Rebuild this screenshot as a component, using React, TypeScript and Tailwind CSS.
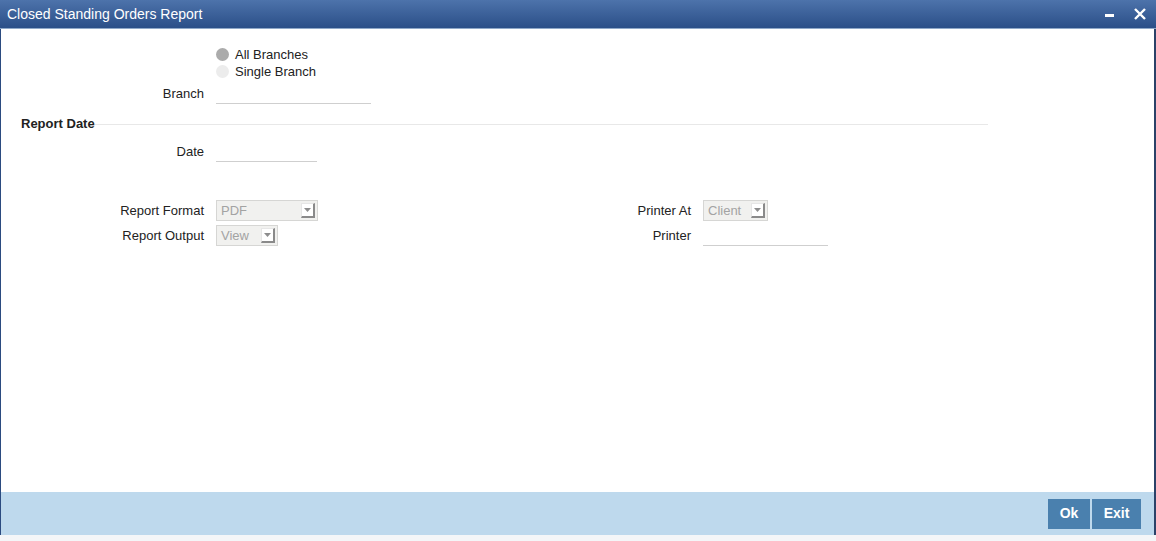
import React from "react";

const font = { fontFamily: '"Liberation Sans", Arial, sans-serif' };

const SelectBox = ({ value, width }: { value: string; width: string }) => (
  <div className={`flex items-center justify-between h-[21px] ${width} bg-[#f1f1ef] border border-[#d6d6d4] pl-1 pr-[2px]`}>
    <span className="text-[13px] text-[#a3a3a3] leading-none">{value}</span>
    <span className="flex items-center justify-center w-[14px] h-[15px] bg-white border-r-2 border-b-2 border-[#8a8a8a] border-t border-l border-t-[#e6e6e6] border-l-[#e6e6e6]">
      <svg width="7" height="4" viewBox="0 0 7 4">
        <path d="M0 0h7L3.5 4z" fill="#8d8d8d" />
      </svg>
    </span>
  </div>
);

const Underline = ({ width }: { width: string }) => (
  <div className={`h-[21px] ${width} border-b border-[#cfcfcf]`} />
);

const Label = ({ children }: { children: React.ReactNode }) => (
  <span className="text-[13px] text-[#222] text-right leading-none">{children}</span>
);

export default function App() {
  return (
    <div className="w-[1156px] h-[541px] flex flex-col bg-white overflow-hidden" style={font}>
      {/* Title bar */}
      <div className="h-[29px] shrink-0 flex items-center justify-between pl-[7px] pr-[10px] bg-gradient-to-b from-[#4d73ab] to-[#2b4f88] border-b border-[#8fa8c8]">
        <span className="text-[14px] text-white leading-none">Closed Standing Orders Report</span>
        <div className="flex items-center gap-[20px]">
          <span className="block w-[9px] h-[3px] bg-white mt-[2px]" />
          <svg width="12" height="12" viewBox="0 0 12 12">
            <path d="M1 1L11 11M11 1L1 11" stroke="white" strokeWidth="2.4" />
          </svg>
        </div>
      </div>

      {/* Body */}
      <div className="flex-1 flex flex-col border-l border-[#2b4b80] border-r-2 border-r-[#2b4268]">
        <div className="grid grid-cols-[203px_1fr] gap-x-3 items-center pt-[17px]">
          <div />
          <div className="flex flex-col">
            <div className="flex items-center gap-[6px] h-[17px]">
              <span className="w-[13px] h-[13px] rounded-full bg-[#ababab]" />
              <span className="text-[13px] text-[#222] leading-none">All Branches</span>
            </div>
            <div className="flex items-center gap-[6px] h-[17px]">
              <span className="w-[13px] h-[13px] rounded-full bg-[#ececec]" />
              <span className="text-[13px] text-[#222] leading-none">Single Branch</span>
            </div>
          </div>
        </div>

        <div className="grid grid-cols-[203px_1fr] gap-x-3 items-center mt-[3px]">
          <Label>Branch</Label>
          <Underline width="w-[155px]" />
        </div>

        <div className="flex items-center pl-5 pr-[166px] mt-[13px]">
          <span className="text-[13px] font-bold text-[#222] leading-none">Report Date</span>
          <div className="flex-1 h-px bg-[#e8e8e8] mt-[1px]" />
        </div>

        <div className="grid grid-cols-[203px_1fr] gap-x-3 items-center mt-[11px]">
          <Label>Date</Label>
          <Underline width="w-[101px]" />
        </div>

        <div className="flex mt-[38px]">
          <div className="w-[487px] grid grid-cols-[203px_1fr] gap-x-3 gap-y-[4px] items-center">
            <Label>Report Format</Label>
            <SelectBox value="PDF" width="w-[102px]" />
            <Label>Report Output</Label>
            <SelectBox value="View" width="w-[62px]" />
          </div>
          <div className="grid grid-cols-[203px_1fr] gap-x-3 gap-y-[4px] items-center">
            <Label>Printer At</Label>
            <SelectBox value="Client" width="w-[65px]" />
            <Label>Printer</Label>
            <Underline width="w-[125px]" />
          </div>
        </div>
      </div>

      {/* Footer */}
      <div className="h-[43px] shrink-0 flex items-center justify-end gap-[2px] pr-[13px] bg-[#bed9ed] border-l border-[#2b4b80] border-r-2 border-r-[#2b4268]">
        <button className="h-[30px] w-[42px] bg-[#4a80ae] text-white text-[14px] font-bold">Ok</button>
        <button className="h-[30px] w-[49px] bg-[#4a80ae] text-white text-[14px] font-bold">Exit</button>
      </div>
      <div className="h-[6px] shrink-0 bg-[#f4f6f8]" />
    </div>
  );
}
